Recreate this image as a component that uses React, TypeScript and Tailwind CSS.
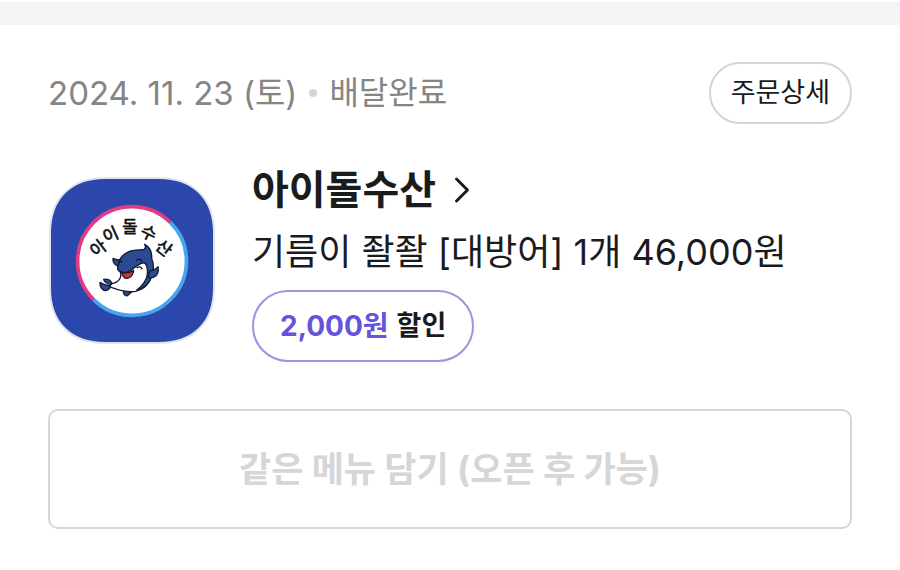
import { ChevronRight } from "lucide-react";

/* Shop logo: squircle tile, two-tone ring, curved name and the dolphin mascot */
const letters = [
  { char: "아", x: 174, y: 234, angle: -38 },
  { char: "이", x: 212, y: 194, angle: -24 },
  { char: "돌", x: 270, y: 172, angle: 0 },
  { char: "수", x: 326, y: 189, angle: 26 },
  { char: "산", x: 372, y: 234, angle: 38 },
];

function ShopLogo() {
  return (
    <svg
      viewBox="27 21 498 501"
      className="h-[167px] w-[166px] shrink-0"
      role="img"
      aria-label="아이돌수산"
    >
      <path
        d="M196 24H356C460 24 522 86 522 190V354C522 458 460 519 356 519H196C92 519 30 458 30 354V190C30 86 92 24 196 24Z"
        fill="#2b47ab"
        stroke="#dfe4ee"
        strokeWidth="6"
      />
      <circle cx="276" cy="273" r="160" fill="#fff" />
      <path d="M161 389A163 163 0 0 1 391 157" fill="none" stroke="#e23a83" strokeWidth="11" />
      <path d="M391 157A163 163 0 0 1 161 389" fill="none" stroke="#45a5ee" strokeWidth="11" />
      <g
        fill="#111"
        stroke="#111"
        strokeWidth="2"
        fontSize="50"
        textAnchor="middle"
        className="font-['Noto_Sans_CJK_KR',sans-serif]"
      >
        {letters.map((l) => (
          <text key={l.char} transform={`translate(${l.x} ${l.y}) rotate(${l.angle})`} y="18">
            {l.char}
          </text>
        ))}
      </g>
      <g stroke="#141a2c" strokeWidth="4" strokeLinejoin="round" strokeLinecap="round">
        {/* lower fin */}
        <path d="M250 365C251 373 255 379 262 377C267 373 271 368 277 364Z" fill="#2b4a94" />
        {/* belly */}
        <path
          d="M241 304C246 323 238 337 214 341L208 350C230 358 258 369 287 364C312 358 330 340 334 312L326 278L292 272Z"
          fill="#fff"
        />
        {/* tail */}
        <path d="M216 341C213 331 203 325 191 328C193 336 200 341 213 344Z" fill="#2b4a94" />
        <path d="M211 348C198 346 188 344 180 337C179 350 186 361 198 362C206 360 210 355 211 348Z" fill="#2b4a94" />
        {/* back and dorsal fin */}
        <path
          d="M233 298C232 270 249 246 281 241C294 239 304 240 312 238C317 235 318 230 314 223C331 232 336 248 335 265C341 281 342 302 335 320C328 340 312 354 290 361C309 346 320 330 322 312C324 292 318 277 308 279C295 281 283 294 272 302C255 312 237 308 233 298Z"
          fill="#2b4a94"
        />
        {/* side fins */}
        <path d="M233 288C224 284 218 276 219 265C227 269 234 270 239 269C239 275 237 282 233 288Z" fill="#2b4a94" />
        <path d="M331 302C339 302 347 298 354 290C356 301 354 312 347 318C340 323 332 325 325 322C325 313 327 306 331 302Z" fill="#2b4a94" />
        {/* mouth */}
        <path d="M245 307C258 311 270 308 281 302C279 315 271 325 261 325C253 325 247 318 245 307Z" fill="#d9302f" />
        {/* eyes and cheek */}
        <path d="M290 271C296 265 302 267 305 273M246 276C242 271 239 273 237 277M291 293C298 288 303 291 306 297" fill="none" />
      </g>
    </svg>
  );
}

export default function App() {
  return (
    <main className="bg-white pt-[2px] font-[Inter,'Noto_Sans_CJK_KR',sans-serif] text-[#1a1b1c]">
      <div className="h-[23px] bg-[#f3f4f6]" />

      <article className="px-12 pt-[37px] pb-10">
        <header className="flex items-center justify-between">
          <p className="flex items-center text-[32px] leading-10 text-[#858585]">
            <time dateTime="2024-11-23" className="text-[33px]">
              2024. 11. 23 (토)
            </time>
            <span className="mx-3 size-2 rounded-full bg-[#d5d5d5]" />
            <span>배달완료</span>
          </p>
          <button
            type="button"
            className="h-[62px] rounded-full border-2 border-[#d5d5d5] px-5 text-[27px] leading-8"
          >
            주문상세
          </button>
        </header>

        <section className="mt-10 flex items-start gap-[37px]">
          <div className="pt-[13px] pl-px">
            <ShopLogo />
          </div>
          <div className="min-w-0">
            <h2 className="text-[40px] leading-[52px] font-bold">
              <a href="#shop" className="inline-flex items-center gap-1">
                아이돌수산
                <ChevronRight className="size-11" strokeWidth={1.6} aria-hidden="true" />
              </a>
            </h2>
            <p className="mt-2 text-[36px] leading-[56px]">기름이 좔좔 [대방어] 1개 46,000원</p>
            <p className="mt-[10px] inline-flex h-[72px] items-center gap-2 rounded-full border-2 border-[#9f92e2] px-[26px] text-[27px] leading-8 font-bold">
              <span className="text-[28px] text-[#6553dc]">2,000원</span>
              <span>할인</span>
            </p>
          </div>
        </section>

        <button
          type="button"
          disabled
          className="mt-[47px] h-[120px] w-full rounded-[10px] border-2 border-[#d5d6d8] text-[35px] leading-10 font-bold text-[#d5d6d8]"
        >
          같은 메뉴 담기 (오픈 후 가능)
        </button>
      </article>
    </main>
  );
}
